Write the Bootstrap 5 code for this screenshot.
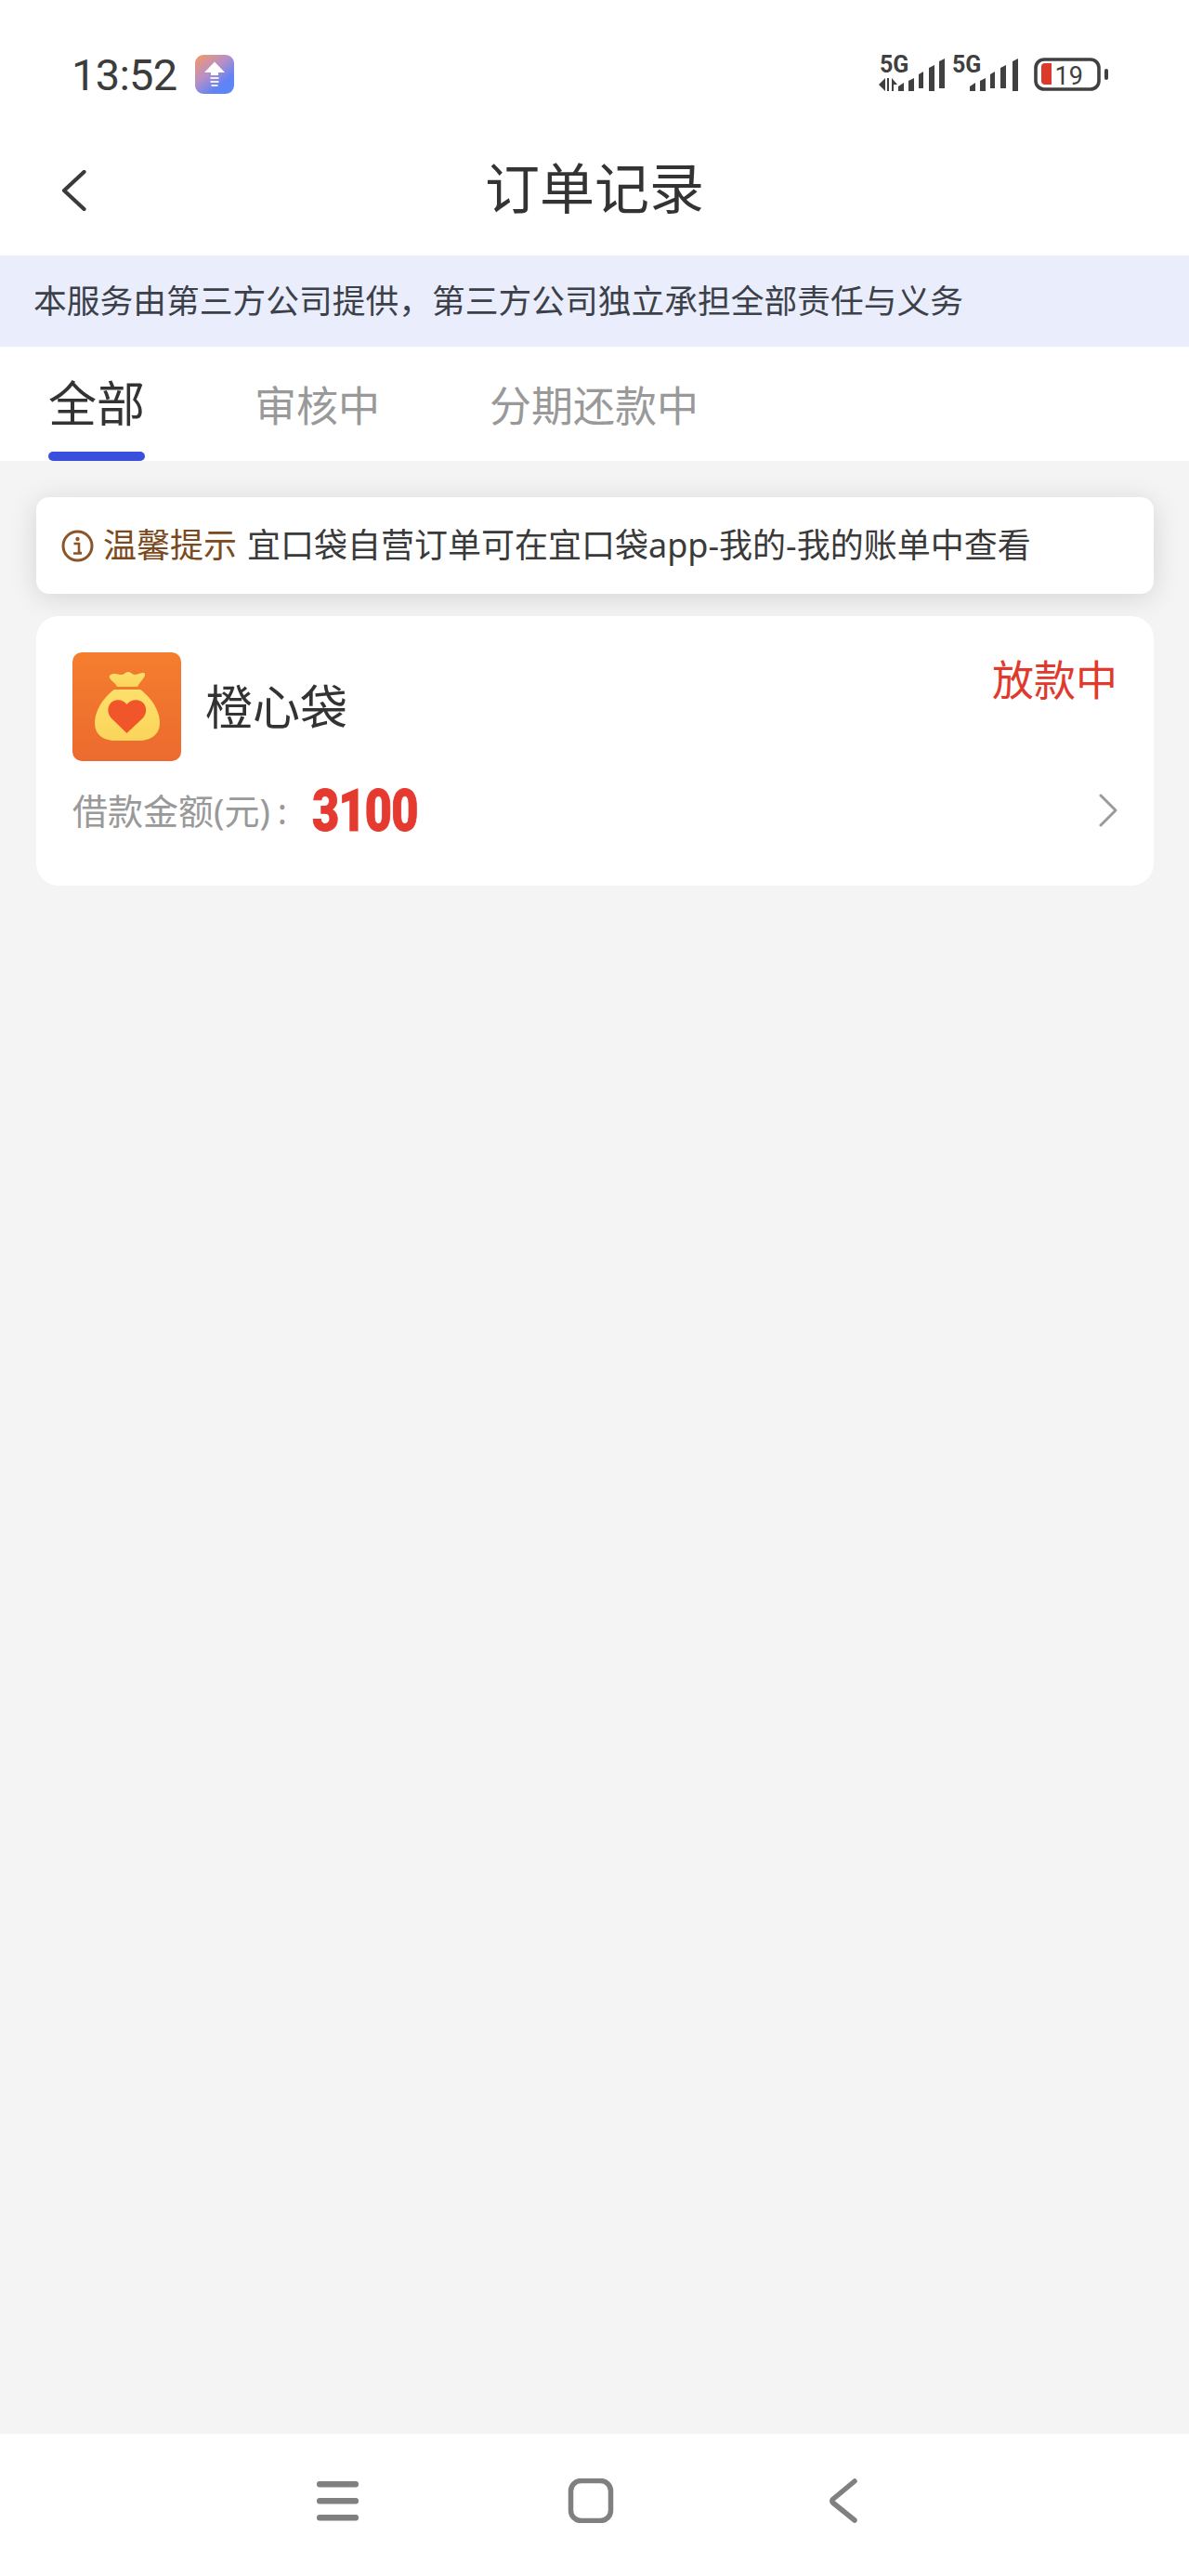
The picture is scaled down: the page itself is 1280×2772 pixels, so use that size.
<!DOCTYPE html>
<html lang="zh-CN">
<head>
<meta charset="utf-8">
<title>订单记录</title>
<link rel="stylesheet" href="https://cdn.jsdelivr.net/npm/bootstrap@5.3.0/dist/css/bootstrap.min.css">
<style>
html,body{height:100%}
body{font-family:"Noto Sans","Noto Sans CJK SC",sans-serif;background:#f4f4f5;color:#333}
.screen{height:2772px}
.status-row{height:130px;padding:30px 87px 0 77px}
.clock{font-family:Roboto,sans-serif;font-size:47px;line-height:1;color:#3c3c3c;letter-spacing:-.7px;margin-right:19px}
.nav-row{height:145px}
.back-ico{left:66px;top:53px}
.page-title{font-size:59px;font-weight:400;line-height:1;color:#333;margin:0}
.notice{height:98px;background:#eaeefc;padding-left:36px;font-size:35.75px;color:#3c4048}
.tab-row{height:123px;padding-left:52px;gap:118px}
.tab-item{font-size:45px;color:#999;line-height:1;padding-top:41px}
.tab-on{font-size:52px;color:#333;padding-top:35px}
.tab-bar{width:104px;height:10px;background:#3a50dc;border-radius:5px;margin-top:auto}
.list-area{padding:39px 38px 0 39px;gap:24px}
.tip-box{height:104px;border-radius:14px;box-shadow:0 4px 30px rgba(0,0,0,.13);padding-left:27px;font-size:36px;color:#3a3a3a}
.tip-ico{margin-right:10px}
.tip-lead{color:#7c4a1e;margin-right:11px}
.order-box{height:290px;border-radius:24px;border:0;padding:39px 38px 0 39px}
.brand-name{font-size:51px;line-height:1;color:#333;margin-left:26px}
.state-label{font-size:45px;line-height:1;color:#e03a2e;margin-top:7px;margin-right:1px}
.amount-row{margin-top:30px;height:46px}
.amount-label{font-size:38px;color:#999;line-height:1;margin-right:27px}
.amount-colon{margin-left:8px}
.amount-value{font-family:Roboto,sans-serif;font-size:63px;font-weight:900;line-height:1;color:#e53a30;letter-spacing:-1px;-webkit-text-stroke:1px #e53a30;transform:scaleX(.8);transform-origin:left center}
.gesture-row{height:153px;padding:48px 16px 0 0}
</style>
</head>
<body>
<div class="screen d-flex flex-column">
  <div class="status-row bg-white d-flex align-items-center">
    <span class="clock">13:52</span>
    <svg width="42" height="42" viewBox="0 0 42 42">
      <defs>
        <linearGradient id="up" x1="0" y1="0" x2=".8" y2="1"><stop offset="0" stop-color="#f59a62"/><stop offset=".45" stop-color="#b98fc6"/><stop offset=".8" stop-color="#5f83f5"/><stop offset="1" stop-color="#5c86f7"/></linearGradient>
      </defs>
      <rect width="42" height="42" rx="9" fill="url(#up)"/>
      <path d="M21 7.500 32 19h-7v3h-8v-3h-7z" fill="#fff"/>
      <path d="M16.500 25h9M16.500 29h9M17.500 33h7" stroke="#fff" stroke-width="1.800" opacity=".85"/>
    </svg>
    <svg class="ms-auto" width="248" height="52" viewBox="0 -4 248 52">
      <g fill="#404040" font-family="Roboto,sans-serif">
        <text x="2" y="20" font-size="25" font-weight="700">5G</text>
        <text x="80" y="20" font-size="25" font-weight="700">5G</text>
      </g>
      <g transform="translate(-945 -59)">
        <g fill="#404040">
          <path d="M953 85v14l-7-7zM955 85h2v14h-2zM960 85l6 7h-4v7h-2z"/>
          <path d="M967 94l6-4v9h-6zM978 88l6-3v14h-6zM989 81l5-3v18h-5zM1000 74l6-3v28h-6zM1011 67l6-3v32h-6z"/>
          <path d="M1044 94l6-4v9h-6zM1055 88l6-3v14h-6zM1066 81l5-3v18h-5zM1077 74l6-3v25h-6zM1090 67l6-3v35h-6z"/>
        </g>
        <rect x="1115" y="65" width="68" height="32" rx="9" fill="none" stroke="#404040" stroke-width="3.600"/>
        <path d="M1125 69h7v23h-7a4 4 0 0 1-4-4V73a4 4 0 0 1 4-4z" fill="#db3a2c"/>
        <rect x="1189" y="75" width="4" height="12" rx="2" fill="#404040"/>
      </g>
      <text x="190.500" y="33" font-family="Roboto,sans-serif" font-size="27" fill="#404040">19</text>
    </svg>
  </div>

  <div class="nav-row bg-white position-relative d-flex align-items-center justify-content-center">
    <svg class="back-ico position-absolute" width="27" height="44" viewBox="0 0 27 44"><path d="M24.500 2 3 22l21.500 20" fill="none" stroke="#3a3a3a" stroke-width="4.200" stroke-linecap="round" stroke-linejoin="round"/></svg>
    <h1 class="page-title">订单记录</h1>
  </div>

  <div class="notice d-flex align-items-center">本服务由第三方公司提供，第三方公司独立承担全部责任与义务</div>

  <div class="tab-row bg-white d-flex">
    <div class="tab-item tab-on d-flex flex-column align-items-center">全部<span class="tab-bar"></span></div>
    <div class="tab-item">审核中</div>
    <div class="tab-item">分期还款中</div>
  </div>

  <div class="list-area flex-grow-1 d-flex flex-column">
    <div class="tip-box bg-white d-flex align-items-center">
      <svg class="tip-ico" width="35" height="35" viewBox="0 0 35 35">
        <circle cx="17.500" cy="17.500" r="15.500" fill="none" stroke="#8a5528" stroke-width="3"/>
        <circle cx="17.500" cy="10" r="2.200" fill="#8a5528"/>
        <path d="M13.500 15h5.500v10h3M13 25.500h9" fill="none" stroke="#8a5528" stroke-width="2.600"/>
      </svg>
      <span class="tip-lead">温馨提示</span>
      <span>宜口袋自营订单可在宜口袋app-我的-我的账单中查看</span>
    </div>

    <div class="card order-box">
      <div class="d-flex align-items-start">
        <svg width="117" height="117" viewBox="0 0 117 117">
          <defs>
            <linearGradient id="tile" x1="0" y1="0" x2="0" y2="1"><stop offset="0" stop-color="#f47e2e"/><stop offset="1" stop-color="#ec6a2e"/></linearGradient>
            <linearGradient id="sack" x1="0" y1="0" x2="0" y2="1"><stop offset="0" stop-color="#fde06c"/><stop offset="1" stop-color="#fbd45a"/></linearGradient>
          </defs>
          <rect width="117" height="117" rx="10" fill="url(#tile)"/>
          <path d="M40 25c4-4 9-1 13-1 3 0 4-3 7-3 3 0 4 3 7 3 4 0 9-4 11-1 1 4-6 9-8 14H48c-2-5-10-8-8-12z" fill="url(#sack)"/>
          <path d="M45 40h28c11 8 21 22 21 36 0 13-11 19-22 19H46c-12 0-22-6-22-19 0-14 10-28 21-36z" fill="url(#sack)"/>
          <path d="M58.500 87 42 71c-5-5-5-14 1-18 5-3 12-2 15.500 3 3.500-5 11-6 16-3 6 4 6 13 1 18z" fill="#f0562a"/>
        </svg>
        <span class="brand-name align-self-center">橙心袋</span>
        <span class="state-label ms-auto">放款中</span>
      </div>
      <div class="amount-row d-flex align-items-center">
        <span class="amount-label">借款金额(元)<span class="amount-colon">:</span></span>
        <span class="amount-value">3100</span>
        <svg class="ms-auto" width="22" height="36" viewBox="0 0 22 36"><path d="M3 2l16 16L3 34" fill="none" stroke="#9a9a9a" stroke-width="3" stroke-linecap="round" stroke-linejoin="round"/></svg>
      </div>
    </div>
  </div>

  <div class="gesture-row bg-white d-flex justify-content-center align-items-start">
    <svg width="582" height="48" viewBox="341 2667 582 48">
      <g fill="#808080">
        <rect x="341" y="2670" width="45" height="6.500" rx="3"/>
        <rect x="341" y="2688" width="45" height="6.500" rx="3"/>
        <rect x="341" y="2706" width="45" height="6.500" rx="3"/>
      </g>
      <rect x="614.500" y="2669.500" width="43" height="43" rx="11" fill="none" stroke="#808080" stroke-width="5.500"/>
      <path d="M920 2670 896.500 2689.500a2.500 2.500 0 0 0 0 3.500L920 2712" fill="none" stroke="#808080" stroke-width="5.500" stroke-linecap="round" stroke-linejoin="round"/>
    </svg>
  </div>
</div>
<script src="https://cdn.jsdelivr.net/npm/bootstrap@5.3.0/dist/js/bootstrap.bundle.min.js"></script>
</body>
</html>
